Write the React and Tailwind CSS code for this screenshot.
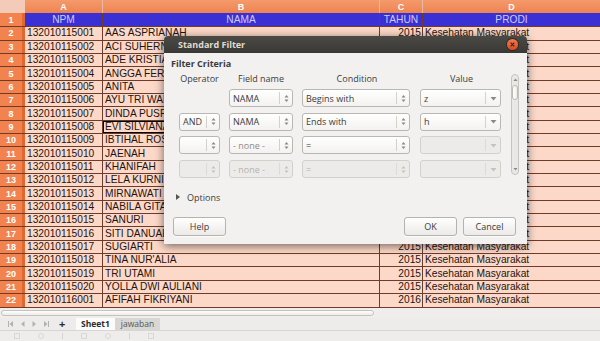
import React from "react";

const names = [
  "AAS ASPRIANAH",
  "ACI SUHERNI",
  "ADE KRISTIANI",
  "ANGGA FERDIANSYAH",
  "ANITA",
  "AYU TRI WAHYUNI",
  "DINDA PUSPITA",
  "EVI SILVIANA",
  "IBTIHAL ROSYIDAH",
  "JAENAH",
  "KHANIFAH",
  "LELA KURNIASIH",
  "MIRNAWATI",
  "NABILA GITA",
  "SANURI",
  "SITI DANUARI",
  "SUGIARTI",
  "TINA NUR'ALIA",
  "TRI UTAMI",
  "YOLLA DWI AULIANI",
  "AFIFAH FIKRIYANI",
];

const rows = names.map((name, i) => ({
  num: i + 2,
  npm: i === 20 ? "132010116001" : "1320101150" + String(i + 1).padStart(2, "0"),
  name,
  year: i === 20 ? "2016" : "2015",
  prodi: "Kesehatan Masyarakat",
}));

// little up/down arrows used by the spin-style combos
function SpinArrows({ faded }) {
  return (
    <svg width="5" height="9" viewBox="0 0 5 9">
      <path d="M0.5 3.5 L2.5 1 L4.5 3.5 Z" fill={faded ? "#c4c2bd" : "#8a8883"} />
      <path d="M0.5 5.5 L2.5 8 L4.5 5.5 Z" fill={faded ? "#c4c2bd" : "#8a8883"} />
    </svg>
  );
}

function DropArrow({ faded }) {
  return (
    <svg width="7" height="5" viewBox="0 0 7 5">
      <path d="M0.5 1 L6.5 1 L3.5 4.5 Z" fill={faded ? "#c4c2bd" : "#8a8883"} />
    </svg>
  );
}

function Combo({ width, text, drop, disabled, muted }) {
  return (
    <div
      className={`flex h-[18px] shrink-0 items-stretch rounded-[3px] border ${
        disabled
          ? "border-[#d3d1cc] bg-[#ecebe9] text-[#b5b3ae]"
          : "border-[#b9b7b1] bg-gradient-to-b from-white to-[#f3f2f0] text-[#3c3c3c]"
      }`}
      style={{ width }}
    >
      <div
        className={`flex flex-1 items-center overflow-hidden whitespace-nowrap pl-[3px] leading-[11px] ${
          muted ? "text-[#8d8b86]" : ""
        }`}
      >
        {text}
      </div>
      <div
        className={`my-[2px] flex items-center justify-center border-l ${
          drop ? "w-[15px]" : "w-[13px]"
        } ${disabled ? "border-[#dddbd7]" : "border-[#d3d1cc]"}`}
      >
        {drop ? <DropArrow faded={disabled} /> : <SpinArrows faded={disabled} />}
      </div>
    </div>
  );
}

function Button({ children, width }) {
  return (
    <div
      className="flex h-[19px] items-center justify-center rounded-[3px] border border-[#b5b3ad] bg-gradient-to-b from-white to-[#ebeae7] leading-[11px] text-[#3c3c3c] shadow-[0_1px_0_rgba(255,255,255,0.8)]"
      style={{ width }}
    >
      {children}
    </div>
  );
}

function Sheet() {
  const cell = "border-r border-[#6e3c28] overflow-hidden whitespace-nowrap";
  return (
    <div className="font-['Liberation_Sans',Arial,sans-serif] text-[10.2px] leading-[12px] text-[#1e1410]">
      {/* column letters */}
      <div className="flex h-[13px] bg-gradient-to-b from-[#f49a6c] to-[#ee8450] text-[9px] font-bold text-white">
        <div className="w-[25px] shrink-0 bg-[#f3cbb8]" />
        <div className="flex w-[78px] shrink-0 items-center justify-center border-r border-[#e9b9a0]">A</div>
        <div className="flex w-[277px] shrink-0 items-center justify-center border-r border-[#e9b9a0]">B</div>
        <div className="flex w-[43px] shrink-0 items-center justify-center border-r border-[#e9b9a0]">C</div>
        <div className="flex flex-1 items-center justify-center">D</div>
      </div>
      {/* header row */}
      <div className="flex h-[14.3px] border-b border-[#6e3c28]">
        <div className="flex w-[25px] shrink-0 items-center justify-center border-r-[3px] border-[#e2672f] bg-[#f2834f] text-[9px] font-bold text-white">
          1
        </div>
        <div className={`${cell} flex w-[78px] shrink-0 items-center justify-center bg-[#3b30d3] text-[#cfcbf6]`}>NPM</div>
        <div className={`${cell} flex w-[277px] shrink-0 items-center justify-center bg-[#3b30d3] text-[#cfcbf6]`}>NAMA</div>
        <div className={`${cell} flex w-[43px] shrink-0 items-center justify-center bg-[#3b30d3] text-[#cfcbf6]`}>TAHUN</div>
        <div className="flex flex-1 items-center justify-center bg-[#3b30d3] text-[#cfcbf6]">PRODI</div>
      </div>
      {rows.map((r) => (
        <div key={r.num} className="flex h-[13.35px] border-b border-[#6e3c28] bg-[#fcd8c8]">
          <div className="flex w-[25px] shrink-0 items-center justify-center border-r-[3px] border-[#e2672f] bg-[#f2834f] text-[9px] font-bold text-white">
            {r.num}
          </div>
          <div className={`${cell} flex w-[78px] shrink-0 items-center pl-[2px]`}>{r.npm}</div>
          <div
            className={`${cell} flex w-[277px] shrink-0 items-center pl-[2px] ${
              r.num === 9 ? "outline outline-1 -outline-offset-1 outline-black" : ""
            }`}
          >
            {r.name}
          </div>
          <div className={`${cell} flex w-[43px] shrink-0 items-center justify-end pr-[1px]`}>{r.year}</div>
          <div className="flex flex-1 items-center pl-[2px]">{r.prodi}</div>
        </div>
      ))}
    </div>
  );
}

function Dialog() {
  return (
    <div className="absolute left-[164px] top-[36px] w-[363px] overflow-hidden rounded-t-[4px] bg-[#f2f1f0] font-['Open_Sans',sans-serif] text-[9px] leading-[11px] text-[#3c3c3c] shadow-[0_2px_10px_rgba(0,0,0,0.55)]">
      {/* title bar */}
      <div className="flex h-[17px] items-center justify-between bg-gradient-to-b from-[#4a4944] to-[#3a3935] pl-[14px] pr-[9px]">
        <span className="font-bold text-[#dfdbd2]">Standard Filter</span>
        <div className="flex h-[11px] w-[11px] items-center justify-center rounded-full bg-gradient-to-b from-[#f37a4e] to-[#dc4a1c] shadow-[0_0_0_1px_#2c2b28]">
          <svg width="5" height="5" viewBox="0 0 5 5">
            <path d="M0.7 0.7 L4.3 4.3 M4.3 0.7 L0.7 4.3" stroke="#3a2a22" strokeWidth="1.2" />
          </svg>
        </div>
      </div>

      <div className="pb-[8px] pl-[7px] pr-[7px]">
        <div className="mt-[5px] h-[13px] font-bold">Filter Criteria</div>

        <div className="flex">
          <div className="flex w-[334px] flex-col pl-[8px]">
            {/* column headings */}
            <div className="flex h-[15px] items-center gap-[9px] leading-none">
              <div className="w-[41px] text-center">Operator</div>
              <div className="w-[64px] text-center">Field name</div>
              <div className="ml-[1px] w-[108px] text-center">Condition</div>
              <div className="ml-[1px] w-[81px] text-center">Value</div>
            </div>
            <div className="mt-[3px] flex flex-col gap-[5.7px]">
              <div className="flex gap-[9px]">
                <div className="w-[41px] shrink-0" />
                <Combo width={64} text="NAMA" />
                <Combo width={108} text="Begins with" />
                <div className="ml-[1px]">
                  <Combo width={81} text="z" drop />
                </div>
              </div>
              <div className="flex gap-[9px]">
                <Combo width={41} text="AND" />
                <Combo width={64} text="NAMA" />
                <Combo width={108} text="Ends with" />
                <div className="ml-[1px]">
                  <Combo width={81} text="h" drop />
                </div>
              </div>
              <div className="flex gap-[9px]">
                <Combo width={41} text="" />
                <Combo width={64} text="- none -" muted />
                <Combo width={108} text="=" />
                <div className="ml-[1px]">
                  <Combo width={81} text="" drop disabled />
                </div>
              </div>
              <div className="flex gap-[9px]">
                <Combo width={41} text="" disabled />
                <Combo width={64} text="- none -" disabled />
                <Combo width={108} text="=" disabled />
                <div className="ml-[1px]">
                  <Combo width={81} text="" drop disabled />
                </div>
              </div>
            </div>
          </div>

          {/* vertical scrollbar */}
          <div className="ml-[6px] mt-[3px] flex h-[101px] w-[8px] flex-col items-center rounded-[4px] border border-[#c6c4bf] bg-[#e9e8e6]">
            <svg width="5" height="6" viewBox="0 0 5 6" className="mt-[2px]">
              <path d="M0.5 4 L2.5 1.5 L4.5 4 Z" fill="#8a8883" />
            </svg>
            <div className="mt-[2px] h-[15px] w-[6px] rounded-[3px] border border-[#bbb9b4] bg-gradient-to-r from-white to-[#eeedeb]" />
            <div className="flex-1" />
            <svg width="5" height="6" viewBox="0 0 5 6" className="mb-[2px]">
              <path d="M0.5 2 L2.5 4.5 L4.5 2 Z" fill="#8a8883" />
            </svg>
          </div>
        </div>

        {/* options expander */}
        <div className="mt-[13px] flex h-[12px] items-center gap-[7px] pl-[5px]">
          <svg width="4" height="6" viewBox="0 0 4 6">
            <path d="M0 0 L4 3 L0 6 Z" fill="#55544f" />
          </svg>
          <span>Options</span>
        </div>

        {/* buttons */}
        <div className="mt-[14px] flex items-center pl-[2px] pr-[4px]">
          <Button width={53}>Help</Button>
          <div className="flex-1" />
          <div className="flex gap-[6px]">
            <Button width={53}>OK</Button>
            <Button width={53}>Cancel</Button>
          </div>
        </div>
      </div>
    </div>
  );
}

function NavIcon({ d }) {
  return (
    <svg width="7" height="8" viewBox="0 0 7 8">
      <path d={d} fill="#b4b2ad" />
    </svg>
  );
}

export default function App() {
  return (
    <div className="relative h-[341px] w-[600px] overflow-hidden bg-[#edecea]">
      <Sheet />

      {/* horizontal scroll area */}
      <div className="flex h-[10px] items-center bg-[#efeeec] pl-[1px]">
        <div className="h-[6px] w-[373px] rounded-[3px] border border-[#c5c3be] bg-gradient-to-b from-white to-[#ecebe9]" />
      </div>

      {/* sheet tabs */}
      <div className="flex h-[13px] items-stretch border-b border-[#d8d6d2] bg-[#edecea] font-['Open_Sans',sans-serif] text-[8.5px] leading-[11px]">
        <div className="flex w-[76px] items-center gap-[5px] pl-[7px]">
          <NavIcon d="M1 1 L2 1 L2 7 L1 7 Z M6 1 L6 7 L2.5 4 Z" />
          <NavIcon d="M5.5 1 L5.5 7 L2 4 Z" />
          <NavIcon d="M1.5 1 L1.5 7 L5 4 Z" />
          <NavIcon d="M1 1 L1 7 L4.5 4 Z M5 1 L6 1 L6 7 L5 7 Z" />
          <span className="ml-[4px] text-[11px] font-bold leading-none text-[#2b2b2b]">+</span>
        </div>
        <div className="flex w-[39px] items-center justify-center bg-[#fbfbfa] font-bold text-[#2c2c2c]">
          Sheet1
        </div>
        <div className="flex w-[45px] items-center justify-center bg-[#d9d7d3] text-[#555]">jawaban</div>
      </div>

      {/* status bar */}
      <div className="flex h-[10px] items-center gap-[18px] bg-[#eeedeb] pl-[14px]">
        <div className="h-[6px] w-[6px] border border-[#dad8d4]" />
        <div className="h-[6px] w-[6px] rounded-full border border-[#dad8d4]" />
        <div className="h-[6px] w-[1px] bg-[#d6d4d0]" />
        <div className="h-[6px] w-[6px] border border-[#dad8d4]" />
        <div className="h-[6px] w-[6px] rounded-full border border-[#dad8d4]" />
        <div className="h-[6px] w-[1px] bg-[#d6d4d0]" />
        <div className="h-[6px] w-[6px] border border-[#dad8d4]" />
      </div>

      <Dialog />
    </div>
  );
}
